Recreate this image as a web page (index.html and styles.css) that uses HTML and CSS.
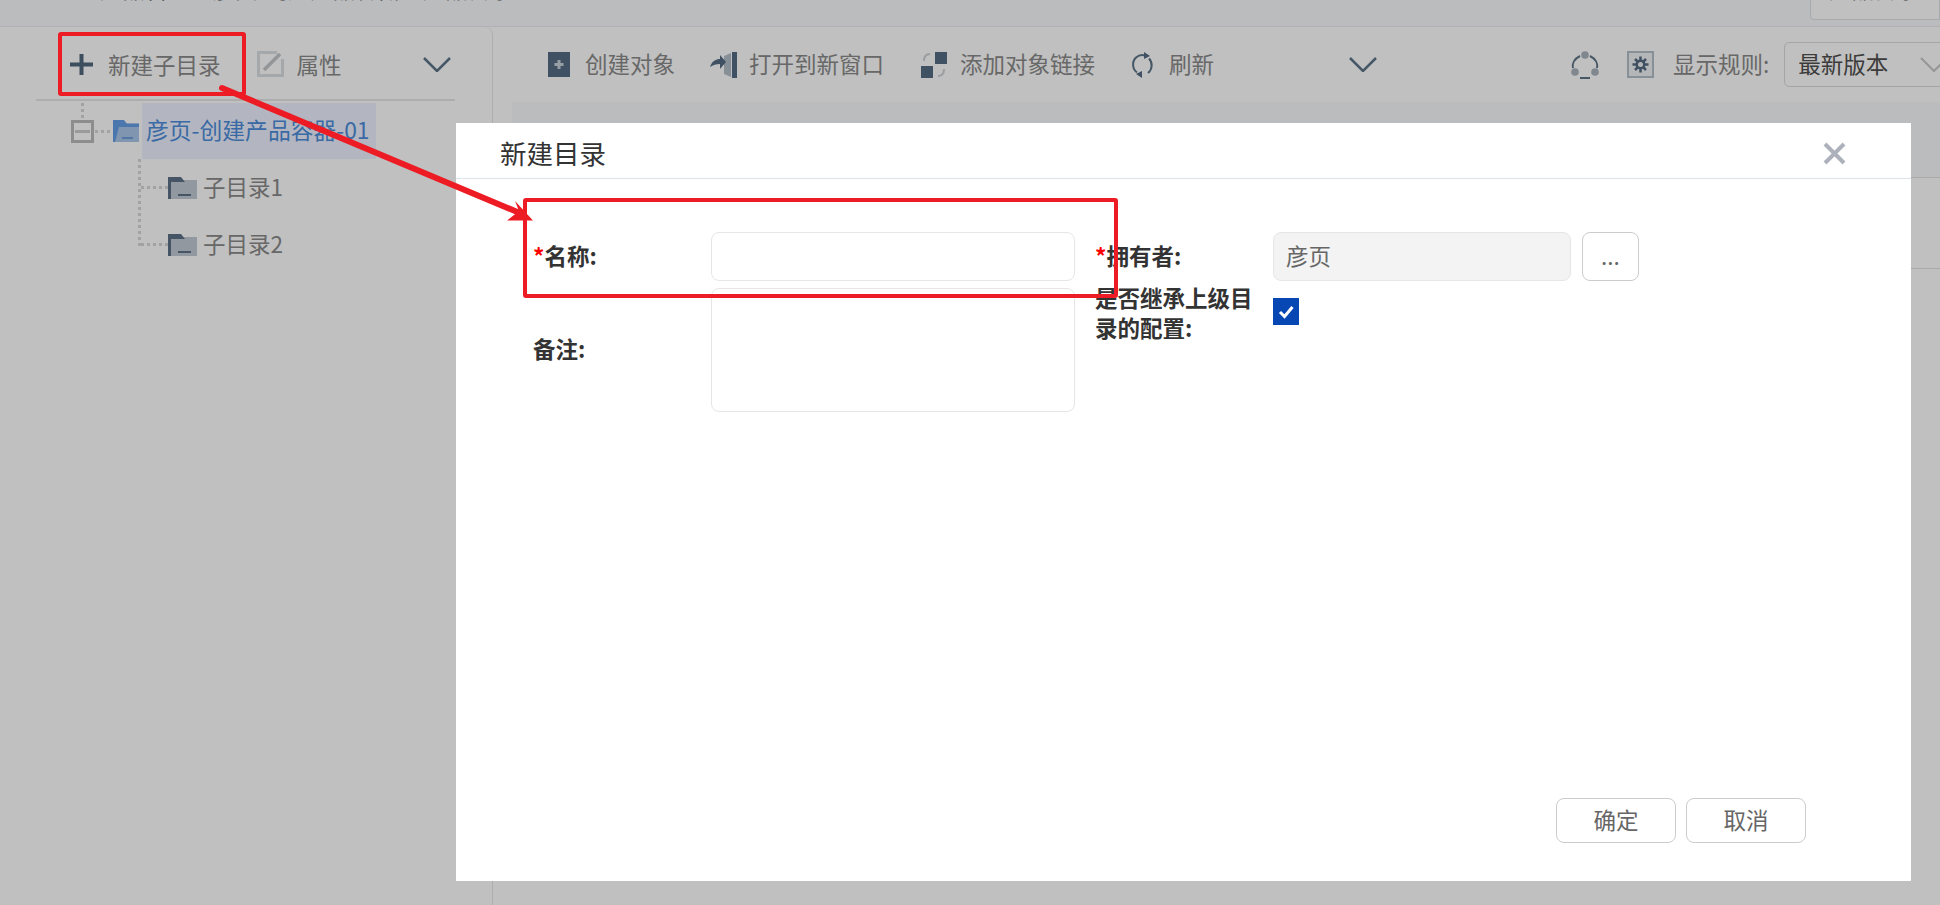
FILE: index.html
```html
<!DOCTYPE html>
<html lang="zh-CN">
<head>
<meta charset="utf-8">
<title>新建目录</title>
<link rel="stylesheet" href="styles.css">
</head>
<body>
<div class="page">
  <header class="topbar">
    <span class="crumb">产品管理（彦页-创建产品容器）产品目录</span>
    <span class="top-control"><span class="crumb-btn">产品目录</span></span>
  </header>
  <main class="workspace">
    <aside class="tree-panel">
      <div class="tree-toolbar">
        <svg class="ico-plus" viewBox="0 0 23 21"><path d="M11.5 0v21M0 10.5h23"/></svg>
        <span class="tb-text tb-new">新建子目录</span>
        <svg class="ico-edit" viewBox="0 0 27 26"><path class="edit-box" d="M20 1.500H1.500V24.500H25.500V8"/><path class="edit-slash" d="M7 19 23 3"/></svg>
        <span class="tb-text tb-prop">属性</span>
        <svg class="ico-chev tree-chev" viewBox="0 0 28 15"><path d="M1 1l13 13L27 1"/></svg>
      </div>
      <div class="tree">
        <div class="node-root">
          <span class="expander"><span class="expander-bar"></span></span>
          <svg class="folder-root" viewBox="0 0 26 22"><path class="fb-front" d="M0 3h26v19H0z"/><path class="fb-back" d="M0 0h11l3 4h12v3H6L2 22H0z"/><path class="fb-dash" d="M9 18h11"/></svg>
          <span class="node-label">彦页-创建产品容器-01</span>
        </div>
        <div class="children">
          <div class="node-child">
            <svg class="folder-child" viewBox="0 0 29 22"><path class="fc-body" d="M0 3h29v19H0z"/><path class="fc-dark" d="M0 0h13l4 5H3v17H0z"/><path class="fc-dash" d="M10 18h13"/></svg>
            <span class="child-label">子目录1</span>
          </div>
          <div class="node-child">
            <svg class="folder-child" viewBox="0 0 29 22"><path class="fc-body" d="M0 3h29v19H0z"/><path class="fc-dark" d="M0 0h13l4 5H3v17H0z"/><path class="fc-dash" d="M10 18h13"/></svg>
            <span class="child-label">子目录2</span>
          </div>
        </div>
      </div>
    </aside>
    <section class="content">
      <div class="content-toolbar">
        <svg class="ico-create" viewBox="0 0 22 25"><path class="dark" d="M0 0h22v25H0z"/><path class="light" d="M11 8v9M6.500 12.500h9"/></svg>
        <span class="tb-text t-create">创建对象</span>
        <svg class="ico-open" viewBox="0 0 27 26"><path class="mid" d="M14 4l7-3v24l-7-3z"/><path class="dark" d="M22 0h5v26h-5z"/><path class="dark" d="M0 15c2-6 6-8 10-8V3l6 7-6 7v-5c-4 0-7 1-10 3z"/></svg>
        <span class="tb-text t-open">打开到新窗口</span>
        <svg class="ico-link" viewBox="0 0 26 26"><path class="dark" d="M14 0h12v12H14zM0 14h12v12H0z"/><path class="arc" d="M9 2C5 2 3 4 3 9M17 24c4 0 6-2 6-7"/></svg>
        <span class="tb-text t-link">添加对象链接</span>
        <svg class="ico-refresh" viewBox="0 0 23 26"><path class="ring" d="M5 5.500A10 10 0 0 1 14 3.500M18 6.500A10 10 0 0 1 17 21M6 20.500A10 10 0 0 1 5 5.500"/><path class="dark" d="M13 0l6 4-6 3zM11 26l-6-4 6-3z"/></svg>
        <span class="tb-text t-refresh">刷新</span>
        <svg class="ico-chev content-chev" viewBox="0 0 28 15"><path d="M1 1l13 13L27 1"/></svg>
        <svg class="ico-network" viewBox="0 0 28 28"><path class="ring" d="M9 5C3 8 1 13 2 17M19 5c6 3 8 8 7 12M9 27h10"/><circle class="dot" cx="14" cy="4" r="3.800"/><circle class="dot" cx="4" cy="21" r="3.800"/><circle class="dot" cx="24" cy="21" r="3.800"/></svg>
        <svg class="ico-gear" viewBox="0 0 27 27"><path class="gear-box" d="M1 1h25v25H1z"/><circle class="gear-cog" cx="13.500" cy="13.500" r="5"/><path class="gear-teeth" d="M13.500 5.500v16M5.500 13.500h16M8 8l11 11M19 8 8 19"/><circle class="gear-hole" cx="13.500" cy="13.500" r="2.500"/></svg>
        <span class="tb-text t-rule">显示规则:</span>
        <div class="version-select">
          <span class="version-text">最新版本</span>
          <svg class="select-chev" viewBox="0 0 28 15"><path d="M1 1l13 13L27 1"/></svg>
        </div>
      </div>
      <div class="table">
        <div class="table-head"></div>
        <div class="table-row"></div>
      </div>
    </section>
  </main>
</div>

<div class="mask"></div>

<div class="dialog">
  <div class="dialog-head">
    <h2 class="dialog-title">新建目录</h2>
    <svg class="dialog-close" viewBox="0 0 23 23"><path d="M2 2l19 19M21 2 2 21"/></svg>
  </div>
  <form class="dialog-body">
    <div class="form-col form-left">
      <div class="field field-name">
        <label class="field-label"><span class="req">*</span>名称:</label>
        <input class="text-input" type="text">
      </div>
      <div class="field field-note">
        <label class="field-label">备注:</label>
        <textarea class="text-area"></textarea>
      </div>
    </div>
    <div class="form-col form-right">
      <div class="field field-name">
        <label class="field-label"><span class="req">*</span>拥有者:</label>
        <input class="text-input owner-input" type="text" value="彦页" readonly>
        <button class="pick-btn" type="button">...</button>
      </div>
      <div class="field field-inherit">
        <label class="field-label inherit-label">是否继承上级目录的配置:</label>
        <span class="check"><svg viewBox="0 0 26 27"><path d="M7 14l4.500 4.500L19.500 9"/></svg></span>
      </div>
    </div>
  </form>
  <div class="dialog-foot">
    <button class="foot-btn" type="button">确定</button>
    <button class="foot-btn" type="button">取消</button>
  </div>
</div>

<svg class="annotations" viewBox="0 0 1940 905">
  <rect class="mark" x="60" y="34" width="184" height="60" rx="1"/>
  <rect class="mark" x="525" y="200" width="591" height="96" rx="1"/>
  <path class="arrow-line" d="M222 88 522 214"/>
  <path class="arrow-head" d="M533 220.500H507L519 211 515 201z"/>
</svg>
</body>
</html>
```

FILE: styles.css
```css
* { box-sizing: border-box; }

html, body {
  margin: 0;
  height: 100%;
  overflow: hidden;
}

body {
  position: relative;
  width: 1940px;
  height: 905px;
  background: #fff;
  font-family: "Noto Sans CJK SC", "Noto Sans", sans-serif;
  color: #888;
}

.page {
  display: flex;
  flex-direction: column;
  height: 905px;
}

/* top bar */
.topbar {
  display: flex;
  align-items: flex-start;
  justify-content: space-between;
  flex: none;
  height: 27px;
  padding-left: 100px;
  overflow: hidden;
  background: #f9fafc;
  border-bottom: 1px solid #ebebee;
}

.crumb {
  display: block;
  margin-top: -27px;
  font-size: 22.5px;
  line-height: 30px;
  color: #555;
  white-space: nowrap;
}

.top-control {
  display: block;
  width: 130px;
  height: 20px;
  overflow: hidden;
  border: 1px solid #dfe2e8;
  border-top: 0;
  border-radius: 0 0 0 4px;
  padding-left: 18px;
  background: #ffffff;
}

.crumb-btn {
  display: block;
  margin-top: -27px;
  font-size: 22.5px;
  line-height: 30px;
  color: #555;
  white-space: nowrap;
}

/* workspace */
.workspace {
  display: flex;
  flex: 1;
  min-height: 0;
}

.tree-panel {
  flex: none;
  width: 493px;
  border-right: 1px solid #e6e6e6;
  border-top-right-radius: 8px;
}

.tree-toolbar {
  display: flex;
  align-items: center;
  height: 74px;
  margin: 0 37px 0 36px;
  padding-top: 2px;
  padding-left: 34px;
  border-bottom: 2px solid #e6e6e6;
}

.tb-text {
  flex: none;
  font-size: 22.5px;
  line-height: 30px;
  white-space: nowrap;
  color: #8a8a8a;
}

.ico-plus {
  flex: none;
  width: 23px;
  height: 21px;
  fill: none;
  stroke: #51697f;
  stroke-width: 4;
}

.tb-new { margin-left: 15px; }

.ico-edit {
  flex: none;
  width: 27px;
  height: 26px;
  margin-left: 36px;
  fill: none;
}

.edit-box { stroke: #dcdfe2; stroke-width: 3; }
.edit-slash { stroke: #c4c8cc; stroke-width: 3.500; }

.tb-prop { margin-left: 13px; }

.ico-chev {
  flex: none;
  width: 28px;
  height: 15px;
  fill: none;
  stroke: #5d7488;
  stroke-width: 2.500;
}

.tree-chev { margin-left: 81px; }

/* tree */
.node-root {
  position: relative;
  display: flex;
  align-items: center;
  height: 56px;
  margin-top: 2px;
  padding-left: 71px;
}

.node-root::before {
  content: "";
  position: absolute;
  left: 81px;
  top: 0;
  width: 3px;
  height: 16px;
  background: repeating-linear-gradient(to bottom, #d8d8d8 0 3px, transparent 3px 6px);
}

.node-root::after {
  content: "";
  position: absolute;
  left: 95px;
  top: 27px;
  width: 17px;
  height: 3px;
  background: repeating-linear-gradient(to right, #d8d8d8 0 3px, transparent 3px 6px);
}

.expander {
  display: flex;
  align-items: center;
  justify-content: center;
  flex: none;
  width: 23px;
  height: 23px;
  border: 3px solid #bcbcbc;
}

.expander-bar {
  display: block;
  width: 15px;
  height: 3px;
  background: #cdcdcd;
}

.folder-root {
  flex: none;
  width: 26px;
  height: 22px;
  margin-left: 19px;
}

.fb-back { fill: #669fe8; }
.fb-front { fill: #a9c6ea; }
.fb-dash { stroke: #6f9fd8; stroke-width: 2; fill: none; }

.node-label {
  display: flex;
  align-items: center;
  flex: none;
  width: 234px;
  height: 56px;
  margin-left: 3px;
  padding: 0 0 4px 4px;
  background: #eef2ff;
  font-size: 22.800px;
  color: #4d8ddb;
  white-space: nowrap;
}

.children {
  position: relative;
}

.children::before {
  content: "";
  position: absolute;
  left: 138px;
  top: 0;
  width: 3px;
  height: 88px;
  background: repeating-linear-gradient(to bottom, #d8d8d8 0 3px, transparent 3px 6px);
}

.node-child {
  position: relative;
  display: flex;
  align-items: center;
  height: 57px;
  padding-left: 168px;
}

.node-child::before {
  content: "";
  position: absolute;
  left: 141px;
  top: 27px;
  width: 27px;
  height: 3px;
  background: repeating-linear-gradient(to right, #d8d8d8 0 3px, transparent 3px 6px);
}

.folder-child {
  flex: none;
  width: 29px;
  height: 22px;
}

.fc-body { fill: #c2cad4; }
.fc-dark { fill: #5c7288; }
.fc-dash { stroke: #5c7288; stroke-width: 2; fill: none; }

.child-label {
  margin: 0 0 4px 6px;
  font-size: 22.5px;
  color: #8a8a8a;
  white-space: nowrap;
}

/* content */
.content {
  flex: 1;
  min-width: 0;
}

.content-toolbar {
  display: flex;
  align-items: center;
  height: 75px;
  padding-left: 55px;
}

.content-toolbar svg { flex: none; }
.content-toolbar .tb-text { margin-bottom: 3px; }

.dark { fill: #546c82; }
.mid { fill: #b4bfc9; }
.dot { fill: #aab4be; }
.light { fill: none; stroke: #c9d2da; stroke-width: 3; }
.arc { fill: none; stroke: #cfd3d7; stroke-width: 2; }
.ring { fill: none; stroke: #5d7488; stroke-width: 2; }

.ico-create { width: 22px; height: 25px; }
.t-create { margin-left: 15px; }
.ico-open { width: 27px; height: 26px; margin-left: 35px; }
.t-open { margin-left: 12px; }
.ico-link { width: 26px; height: 26px; margin-left: 37px; }
.t-link { margin-left: 13px; }
.ico-refresh { width: 23px; height: 26px; margin-left: 36px; }
.t-refresh { margin-left: 15px; }
.content-chev { margin-left: 135px; }
.ico-network { width: 28px; height: 28px; margin-left: 194px; }
.ico-gear { width: 27px; height: 27px; margin-left: 28px; }
.gear-box { fill: #f0f2f4; stroke: #b4bfc9; stroke-width: 2; }
.gear-cog { fill: #546c82; }
.gear-teeth { stroke: #546c82; stroke-width: 2.500; fill: none; }
.gear-hole { fill: #f0f2f4; }
.t-rule { margin-left: 19px; }

.version-select {
  display: flex;
  align-items: center;
  flex: none;
  width: 180px;
  height: 45px;
  margin-left: 15px;
  padding-left: 13px;
  border: 1px solid #dcdcdc;
  border-radius: 5px;
  font-size: 22.5px;
  color: #4f4f4f;
  white-space: nowrap;
}

.version-text { margin-bottom: 3px; }

.select-chev {
  flex: none;
  width: 28px;
  height: 15px;
  margin-left: 32px;
  fill: none;
  stroke: #c8c8c8;
  stroke-width: 2;
}

.table {
  margin-left: 19px;
}

.table-head {
  height: 76px;
  background: #f9fafc;
  border-bottom: 1px solid #e2e2e2;
}

.table-row {
  height: 91px;
  border-bottom: 1px solid #e2e2e2;
}

/* mask + dialog */
.mask {
  position: absolute;
  inset: 0;
  background: rgba(0, 0, 0, .247);
}

.dialog {
  position: absolute;
  left: 456px;
  top: 123px;
  width: 1455px;
  height: 758px;
  display: flex;
  flex-direction: column;
  background: #fff;
}

.dialog-head {
  display: flex;
  align-items: center;
  justify-content: space-between;
  flex: none;
  height: 56px;
  padding: 5px 65px 0 44px;
  border-bottom: 1px solid #dde3ea;
}

.dialog-title {
  margin: 0;
  font-size: 26.500px;
  font-weight: 400;
  line-height: 36px;
  color: #333;
}

.dialog-close {
  flex: none;
  width: 23px;
  height: 23px;
  fill: none;
  stroke: #acb1bb;
  stroke-width: 4;
}

.dialog-body {
  display: flex;
  flex: 1;
  padding: 53px 0 0 77px;
}

.form-col {
  display: flex;
  flex-direction: column;
  flex: none;
  width: 562px;
}

.field {
  display: flex;
}

.field-name {
  align-items: center;
  height: 49px;
}

.field-note {
  align-items: center;
  height: 124px;
  margin-top: 7px;
}

.field-label {
  flex: none;
  width: 178px;
  padding-bottom: 4px;
  font-size: 22.500px;
  font-weight: 700;
  line-height: 30px;
  color: #333;
}

.req {
  color: #f00;
  font-weight: 700;
}

.text-input,
.text-area {
  display: block;
  width: 364px;
  height: 100%;
  margin: 0;
  padding: 0 12px;
  border: 1px solid #e6e6e6;
  border-radius: 8px;
  background: #fff;
  font: 400 22.500px "Noto Sans CJK SC", sans-serif;
  color: #666;
  resize: none;
  outline: 0;
}

.owner-input {
  width: 298px;
  padding-bottom: 4px;
  background: #f3f3f3;
}

.pick-btn {
  flex: none;
  width: 57px;
  height: 49px;
  margin-left: 11px;
  padding: 0 0 4px;
  border: 1px solid #ccc;
  border-radius: 8px;
  background: #fff;
  font: 400 22.500px "Noto Sans CJK SC", sans-serif;
  color: #666;
}

.field-inherit {
  margin-top: 1px;
}

.inherit-label {
  width: 178px;
  padding: 0 15px 0 0;
}

.check {
  display: block;
  flex: none;
  width: 26px;
  height: 27px;
  margin-top: 16px;
  background: #0747b3;
}

.check svg {
  display: block;
  width: 26px;
  height: 27px;
  fill: none;
  stroke: #fff;
  stroke-width: 3;
}

.dialog-foot {
  display: flex;
  justify-content: flex-end;
  gap: 10px;
  flex: none;
  padding: 0 105px 38px 0;
}

.foot-btn {
  width: 120px;
  height: 45px;
  padding: 0 0 4px;
  border: 1px solid #ccc;
  border-radius: 8px;
  background: #fff;
  font: 400 22.500px "Noto Sans CJK SC", sans-serif;
  color: #666;
}

/* red annotations */
.annotations {
  position: absolute;
  left: 0;
  top: 0;
  width: 1940px;
  height: 905px;
  pointer-events: none;
}

.mark {
  fill: none;
  stroke: #ed1c24;
  stroke-width: 4;
}

.arrow-line {
  fill: none;
  stroke: #ed1c24;
  stroke-width: 6;
  stroke-linecap: round;
}

.arrow-head {
  fill: #ed1c24;
}
```
